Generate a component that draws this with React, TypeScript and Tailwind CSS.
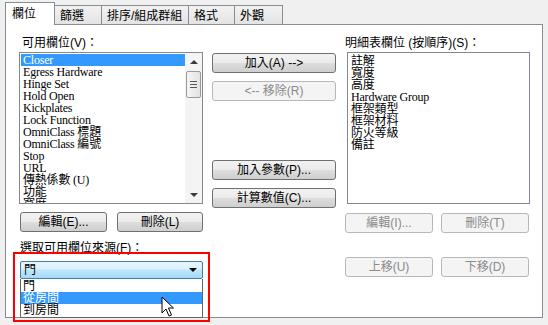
import type { ReactNode } from "react";

const leftFields = [
	"Closer",
	"Egress Hardware",
	"Hinge Set",
	"Hold Open",
	"Kickplates",
	"Lock Function",
	"OmniClass 標題",
	"OmniClass 編號",
	"Stop",
	"URL",
	"傳熱係數 (U)",
	"功能",
	"寬度",
];

const rightFields = ["註解", "寬度", "高度", "Hardware Group", "框架類型", "框架材料", "防火等級", "備註"];

const tabs = [
	{ label: "篩選", w: "w-[47px]" },
	{ label: "排序/組成群組", w: "w-[87px]" },
	{ label: "格式", w: "w-[46px]" },
	{ label: "外觀", w: "w-[48px]" },
];

const ui = "font-['Liberation_Sans','Noto_Sans_CJK_TC',sans-serif]";
const listFont = "font-['Liberation_Serif','Noto_Sans_CJK_TC',serif]";

function Btn({ children, disabled, className }: { children: ReactNode; disabled?: boolean; className: string }) {
	return (
		<div
			className={`flex h-[20px] items-center justify-center rounded-[3px] border text-[12px] leading-none ${
				disabled
					? "border-[#b4b8bb] bg-[#f4f4f4] text-[#8a8a8a]"
					: "border-[#707070] bg-[linear-gradient(#f2f2f2_0%,#ebebeb_50%,#dddddd_51%,#cfcfcf_100%)] text-black"
			} ${className}`}
		>
			{children}
		</div>
	);
}

function Cursor() {
	return (
		<svg width="14" height="22" viewBox="0 0 14 22" className="absolute left-[161px] top-[296px]">
			<path d="M1 1 L1 17 L5 13 L8 20 L10.5 19 L7.5 12 L12.5 12 Z" fill="white" stroke="black" strokeWidth="1" strokeLinejoin="miter" />
		</svg>
	);
}

export default function App() {
	return (
		<div className={`relative h-[325px] w-[548px] overflow-hidden bg-[#f0f0f0] text-black ${ui}`}>
			{/* tab strip */}
			<div className="flex h-[24px] items-end pl-[5px]">
				<div className="relative z-10 -mb-px flex h-[23px] w-[50px] items-start border border-b-0 border-[#898c95] bg-white pl-[6px] pt-[4px] text-[12px] leading-[14px]">
					欄位
				</div>
				{tabs.map((t) => (
					<div
						key={t.label}
						className={`flex h-[19px] ${t.w} items-start border border-l-0 border-b-0 border-[#898c95] bg-[linear-gradient(#f2f2f2,#e3e3e3)] pl-[5px] pt-[3px] text-[12px] leading-[14px]`}
					>
						{t.label}
					</div>
				))}
			</div>

			{/* panel */}
			<div className="ml-[5px] flex h-[294px] w-[538px] border border-[#898c95] bg-white pl-[13px]">
				{/* left column */}
				<div className="flex w-[184px] flex-col">
					<div className="mt-[11px] h-[14px] pl-[3px] text-[12px] leading-[14px]">可用欄位(V)：</div>
					<div className="mt-[2px] flex h-[152px] overflow-hidden border border-[#828790] bg-white">
						<div className={`flex-1 overflow-hidden pl-px pt-px ${listFont} text-[12px] leading-[12px] tracking-[-0.2px]`}>
							{leftFields.map((f, i) => (
								<div key={f} className={`h-[12px] whitespace-nowrap pl-[2px] ${i === 0 ? "bg-[#3399ff] text-white" : ""}`}>
									{f}
								</div>
							))}
						</div>
						<div className="flex w-[17px] flex-col items-center bg-[#f4f4f4]">
							<div className="mt-[7px] h-0 w-0 border-x-[4px] border-b-[4px] border-x-transparent border-b-[#3c3c3c]" />
							<div className="mt-[7px] flex h-[27px] w-[15px] flex-col items-center justify-center gap-[2px] rounded-[2px] border border-[#9a9a9a] bg-[linear-gradient(90deg,#f5f5f5,#e2e2e2)]">
								<div className="h-px w-[7px] bg-[#555]" />
								<div className="h-px w-[7px] bg-[#555]" />
								<div className="h-px w-[7px] bg-[#555]" />
							</div>
							<div className="flex-1" />
							<div className="mb-[6px] h-0 w-0 border-x-[4px] border-t-[4px] border-x-transparent border-t-[#3c3c3c]" />
						</div>
					</div>
					<div className="mt-[8px] flex pl-px">
						<Btn className="w-[87px]">編輯(E)...</Btn>
						<Btn className="ml-[10px] w-[86px]">刪除(L)</Btn>
					</div>
					<div className="mt-[9px] h-[14px] pl-px text-[12px] leading-[14px]">選取可用欄位來源(F)：</div>
					<div className="ml-px mt-[6px] flex h-[18px] w-[183px] items-center justify-between rounded-[2px] border border-[#3c7fb1] bg-[linear-gradient(#eaf6fd_0%,#d9f0fc_45%,#bee6fd_50%,#a7d9f5_100%)] pl-[3px] pr-[5px] text-[12px]">
						<span className="leading-none">門</span>
						<div className="h-0 w-0 border-x-[4px] border-t-[4px] border-x-transparent border-t-black" />
					</div>
				</div>

				{/* middle column */}
				<div className="ml-[9px] flex w-[124px] flex-col">
					<Btn className="mt-[28px] h-[19px]">加入(A) --&gt;</Btn>
					<Btn disabled className="mt-[8px] h-[19px]">&lt;-- 移除(R)</Btn>
					<Btn className="mt-[59px] h-[19px]">加入參數(P)...</Btn>
					<Btn className="mt-[8px] h-[19px]">計算數值(C)...</Btn>
				</div>

				{/* right column */}
				<div className="ml-[9px] flex w-[185px] flex-col">
					<div className="mt-[11px] h-[14px] text-[12px] leading-[14px]">明細表欄位 (按順序)(S)：</div>
					<div className={`ml-[2px] mt-[2px] h-[152px] w-[183px] border border-[#828790] bg-white pl-[3px] pt-[2px] ${listFont} text-[12px] leading-[12px] tracking-[-0.2px]`}>
						{rightFields.map((f) => (
							<div key={f} className="h-[12px] whitespace-nowrap">
								{f}
							</div>
						))}
					</div>
					<div className="mt-[9px] flex">
						<Btn disabled className="w-[88px]">編輯(I)...</Btn>
						<Btn disabled className="ml-[8px] w-[88px]">刪除(T)</Btn>
					</div>
					<div className="mt-[24px] flex">
						<Btn disabled className="w-[88px]">上移(U)</Btn>
						<Btn disabled className="ml-[8px] w-[88px]">下移(D)</Btn>
					</div>
				</div>
			</div>

			{/* open dropdown list */}
			<div className="absolute left-[20px] top-[279px] h-[39px] w-[183px] border border-[#646464] border-t-0 bg-white pt-px text-[12px] leading-[12px]">
				<div className="h-[12px] pl-[2px]">門</div>
				<div className="h-[12px] bg-[#3399ff] pl-[2px] text-white">從房間</div>
				<div className="h-[12px] pl-[2px]">到房間</div>
			</div>

			{/* annotation */}
			<div className="pointer-events-none absolute left-[13px] top-[252px] h-[70px] w-[197px] border-2 border-[#ff0000]" />

			<Cursor />
		</div>
	);
}
